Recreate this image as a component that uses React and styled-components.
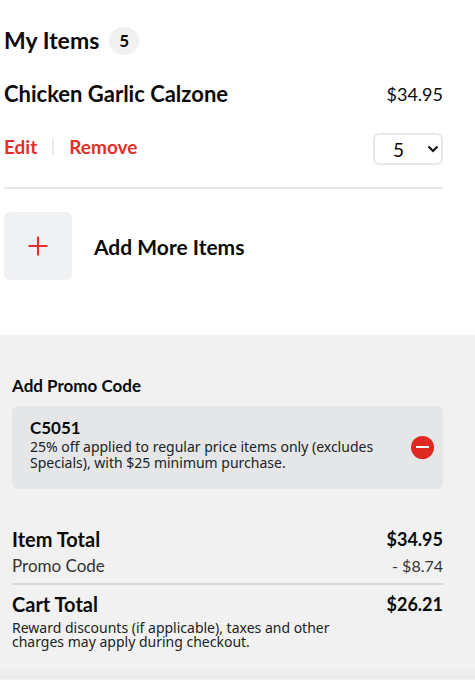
import React, { useState } from "react";
import styled, { createGlobalStyle } from "styled-components";

const GlobalStyle = createGlobalStyle`
  * {
    box-sizing: border-box;
  }

  body {
    margin: 0;
    background: #f1f1f1;
    color: #0b0b0b;
    font-family: Lato, "Noto Sans", sans-serif;
  }

  h2,
  h3,
  p,
  dl,
  dd {
    margin: 0;
  }

  button,
  select {
    font-family: inherit;
    color: inherit;
    cursor: pointer;
  }
`;

const Items = styled.section`
  padding: 26px 32px 55px 4px;
  background: #fff;
`;

const Heading = styled.h2`
  display: flex;
  align-items: center;
  gap: 10px;
  font-size: 23px;
  line-height: 29px;
  font-weight: 700;
`;

const Count = styled.span`
  width: 30px;
  height: 28px;
  border-radius: 50%;
  background: #f1f1f1;
  font-size: 17px;
  line-height: 28px;
  text-align: center;
`;

const Row = styled.div`
  display: flex;
  align-items: ${({ $align }) => $align || "center"};
  justify-content: space-between;
`;

const Item = styled.article`
  margin-top: 24px;
  padding-bottom: 22px;
  border-bottom: 2px solid #e7e7e7;

  ${Row} + ${Row} {
    margin-top: 24px;
  }
`;

const ItemName = styled.h3`
  font-size: 22px;
  line-height: 30px;
  font-weight: 700;
`;

const Price = styled.span`
  font-size: 18px;
  line-height: 28px;
`;

const Actions = styled.div`
  display: flex;
  align-items: center;
`;

const Action = styled.a`
  color: #e22f2b;
  font-size: 19px;
  line-height: 28px;
  font-weight: 700;
  text-decoration: none;
`;

const Divider = styled.span`
  width: 2px;
  height: 16px;
  margin: 0 15px;
  background: #e7e7e7;
`;

const SelectBox = styled.div`
  display: grid;
  align-items: center;
  width: 70px;

  > * {
    grid-area: 1 / 1;
  }

  svg {
    justify-self: end;
    margin-right: 4px;
    pointer-events: none;
  }
`;

const Quantity = styled.select`
  appearance: none;
  width: 100%;
  height: 32px;
  padding: 0 18px;
  border: 2px solid #e7e7e7;
  border-radius: 6px;
  background: #fff;
  font-size: 19px;
`;

const AddMore = styled.button`
  display: flex;
  align-items: center;
  gap: 22px;
  margin-top: 23px;
  padding: 0;
  border: 0;
  background: none;
  font-size: 21px;
  font-weight: 700;
`;

const AddTile = styled.span`
  display: grid;
  place-items: center;
  width: 68px;
  height: 68px;
  border-radius: 6px;
  background: #f0f1f3;
`;

const Summary = styled.section`
  padding: 40px 32px 18px 12px;
  background: #f1f1f1;
`;

const PromoTitle = styled.h3`
  font-size: 17px;
  line-height: 22px;
  font-weight: 700;
`;

const PromoCard = styled.div`
  display: flex;
  align-items: center;
  justify-content: space-between;
  margin: 9px 0 36px;
  padding: 11px 9px 18px 18px;
  border-radius: 6px;
  background: #e5e6e8;
`;

const PromoCode = styled.h3`
  font-size: 17px;
  line-height: 22px;
  font-weight: 700;
`;

const Small = styled.p`
  max-width: 350px;
  color: #222;
  font-family: "Noto Sans", sans-serif;
  font-size: 14px;
  line-height: ${({ $tight }) => ($tight ? "14px" : "16px")};
`;

const RemovePromo = styled.button`
  margin-top: 6px;
  padding: 0;
  border: 0;
  background: none;

  svg {
    display: block;
  }
`;

const Total = styled.div`
  display: flex;
  justify-content: space-between;
  font-size: ${({ $strong }) => ($strong ? "20px" : "17px")};
  line-height: ${({ $strong }) => ($strong ? "29px" : "24px")};
  font-weight: ${({ $strong }) => ($strong ? 700 : 400)};
  color: ${({ $strong }) => ($strong ? "#0b0b0b" : "#333")};

  dd {
    font-size: ${({ $strong }) => ($strong ? "18px" : "16px")};
  }
`;

const Totals = styled.dl`
  margin-bottom: 2px;

  hr {
    height: 2px;
    margin: 5px 0;
    border: 0;
    background: #d8d8d8;
  }
`;

const Fade = styled.div`
  height: 12px;
  background: linear-gradient(#f1f1f1, #e9e9e9);
`;

const quantities = [1, 2, 3, 4, 5, 6, 7, 8, 9, 10];

const App = () => {
  const [quantity, setQuantity] = useState(5);

  return (
    <main>
      <GlobalStyle />
      <Items>
        <Heading>
          My Items <Count>{quantity}</Count>
        </Heading>
        <Item>
          <Row>
            <ItemName>Chicken Garlic Calzone</ItemName>
            <Price>$34.95</Price>
          </Row>
          <Row $align="flex-start">
            <Actions>
              <Action href="#edit">Edit</Action>
              <Divider />
              <Action href="#remove">Remove</Action>
            </Actions>
            <SelectBox>
              <Quantity
                aria-label="Quantity"
                value={quantity}
                onChange={(e) => setQuantity(Number(e.target.value))}
              >
                {quantities.map((n) => (
                  <option key={n} value={n}>
                    {n}
                  </option>
                ))}
              </Quantity>
              <svg width="12" height="8" viewBox="0 0 12 8" fill="none">
                <path d="M1.5 1.5L6 6L10.5 1.5" stroke="#111" strokeWidth="2" />
              </svg>
            </SelectBox>
          </Row>
        </Item>
        <AddMore type="button">
          <AddTile>
            <svg width="20" height="20" viewBox="0 0 20 20">
              <path d="M10 .5V19.5M.5 10H19.5" stroke="#e22f2b" strokeWidth="2" />
            </svg>
          </AddTile>
          Add More Items
        </AddMore>
      </Items>

      <Summary>
        <PromoTitle>Add Promo Code</PromoTitle>
        <PromoCard>
          <div>
            <PromoCode>C5051</PromoCode>
            <Small>
              25% off applied to regular price items only (excludes Specials),
              with $25 minimum purchase.
            </Small>
          </div>
          <RemovePromo type="button" aria-label="Remove promo code">
            <svg width="23" height="23" viewBox="0 0 23 23">
              <circle cx="11.5" cy="11.5" r="11.5" fill="#df2822" />
              <path d="M5 11H18" stroke="#fff" strokeWidth="2" />
            </svg>
          </RemovePromo>
        </PromoCard>

        <Totals>
          <Total $strong>
            <dt>Item Total</dt>
            <dd>$34.95</dd>
          </Total>
          <Total>
            <dt>Promo Code</dt>
            <dd>- $8.74</dd>
          </Total>
          <hr />
          <Total $strong>
            <dt>Cart Total</dt>
            <dd>$26.21</dd>
          </Total>
        </Totals>
        <Small $tight>
          Reward discounts (if applicable), taxes and other charges may apply
          during checkout.
        </Small>
      </Summary>
      <Fade />
    </main>
  );
};

export default App;
